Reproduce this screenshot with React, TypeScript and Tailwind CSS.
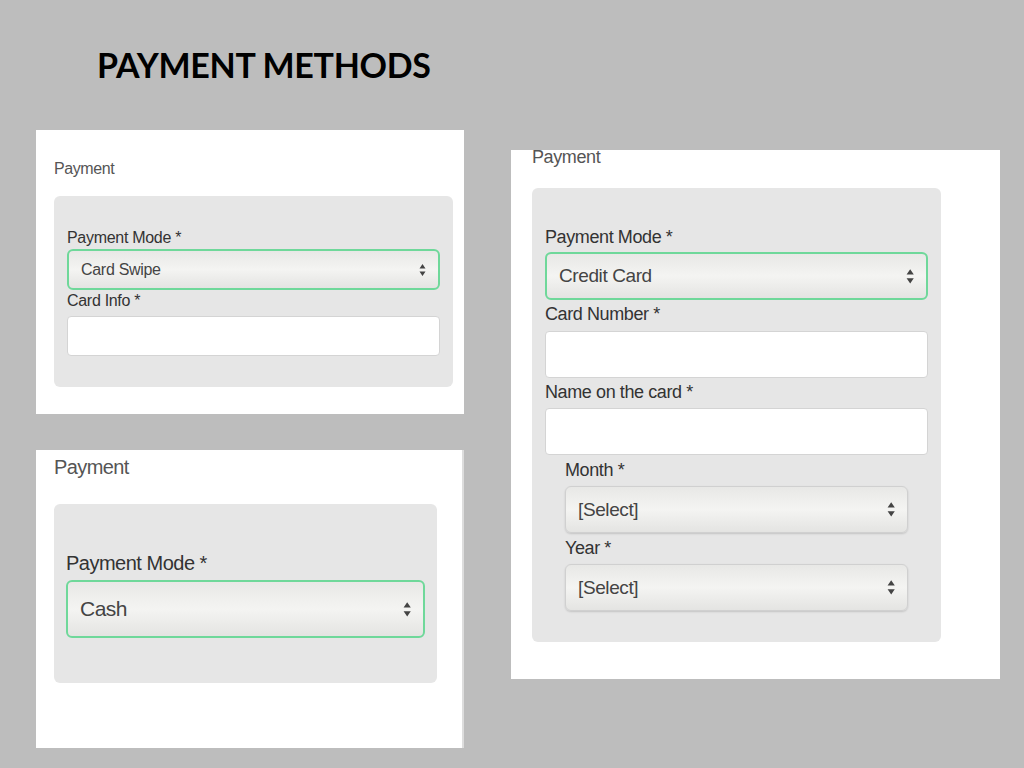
const Arrows = ({ s = 10 }: { s?: number }) => (
  <svg width={s * 0.7} height={s * 1.4} viewBox="0 0 7 14" className="shrink-0">
    <path d="M3.5 1 L6.5 5.5 H0.5 Z M3.5 13 L6.5 8.5 H0.5 Z" fill="#444" />
  </svg>
);

const Sel = ({ text, h, fs, green = true, arrow }: { text: string; h: number; fs: number; green?: boolean; arrow: number }) => (
  <div
    className={`flex items-center justify-between rounded-md px-3 bg-gradient-to-b from-[#e8e8e6] via-[#f4f4f2] to-[#e4e4e2] ${green ? "border-2 border-[#6fd89a]" : "border border-[#d0d0d0] shadow-[0_1px_2px_rgba(0,0,0,0.15)]"}`}
    style={{ height: h, fontSize: fs }}
  >
    <span className="text-[#444]">{text}</span>
    <Arrows s={arrow} />
  </div>
);

const Inp = ({ h }: { h: number }) => <div className="bg-white rounded border border-[#d4d4d4]" style={{ height: h }} />;

export default function App() {
  return (
    <div className="relative w-[1024px] h-[768px] bg-[#bdbdbd] overflow-hidden" style={{ fontFamily: "'Liberation Sans', Arial, sans-serif" }}>
      <div className="absolute left-[97px] top-[39px] text-[34px] font-bold text-black tracking-[-0.3px]" style={{ fontFamily: "Lato, 'Open Sans', sans-serif" }}>PAYMENT METHODS</div>

      <div className="absolute left-[36px] top-[130px] w-[428px] h-[284px] bg-white flex flex-col pl-[18px] pt-[30px]">
        <div className="text-[16px] leading-[18px] text-[#555] tracking-[-0.4px]">Payment</div>
        <div className="mt-[18px] w-[399px] h-[191px] bg-[#e6e6e6] rounded-md px-[13px] pt-[33px] text-[16px] leading-[18px] text-[#333] tracking-[-0.3px] flex flex-col">
          <div className="mb-[2px]">Payment Mode *</div>
          <Sel text="Card Swipe" h={41} fs={16} arrow={10} />
          <div className="mt-[2px] mb-[6px]">Card Info *</div>
          <Inp h={40} />
        </div>
      </div>

      <div className="absolute left-[36px] top-[450px] w-[428px] h-[298px] bg-white border-r-2 border-[#ddd] flex flex-col pl-[18px] pt-[5px]">
        <div className="text-[20px] leading-[24px] text-[#555] tracking-[-0.6px]">Payment</div>
        <div className="mt-[25px] w-[383px] h-[179px] bg-[#e6e6e6] rounded-md px-[12px] pt-[48px] text-[20px] leading-[22px] text-[#333] tracking-[-0.5px] flex flex-col">
          <div className="mb-[6px]">Payment Mode *</div>
          <Sel text="Cash" h={58} fs={21} arrow={12} />
        </div>
      </div>

      <div className="absolute left-[511px] top-[150px] w-[489px] h-[529px] bg-white overflow-hidden flex flex-col pl-[21px] pt-[-2px]">
        <div className="text-[18px] leading-[20px] text-[#555] -mt-[3px] tracking-[-0.4px]">Payment</div>
        <div className="mt-[21px] w-[409px] h-[454px] bg-[#e6e6e6] rounded-md px-[13px] pt-[39px] text-[18px] leading-[20px] text-[#333] tracking-[-0.4px] flex flex-col">
          <div className="mb-[5px]">Payment Mode *</div>
          <Sel text="Credit Card" h={48} fs={19} arrow={12} />
          <div className="mt-[4px] mb-[7px]">Card Number *</div>
          <Inp h={47} />
          <div className="mt-[4px] mb-[6px]">Name on the card *</div>
          <Inp h={47} />
          <div className="px-[20px] flex flex-col">
            <div className="mt-[5px] mb-[6px]">Month *</div>
            <Sel text="[Select]" h={47} fs={19} green={false} arrow={12} />
            <div className="mt-[5px] mb-[6px]">Year *</div>
            <Sel text="[Select]" h={47} fs={19} green={false} arrow={12} />
          </div>
        </div>
      </div>
    </div>
  );
}
